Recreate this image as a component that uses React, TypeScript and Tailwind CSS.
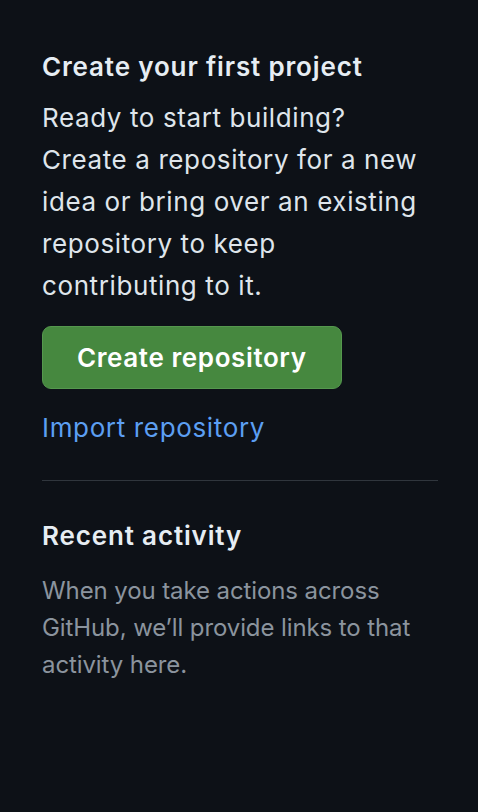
export default function App() {
  return (
    <div
      className="min-h-[812px] w-full bg-[#0d1117] pl-[42px] pr-[40px] pt-[49px] text-[#e6edf3]"
      style={{ fontFamily: 'Inter, "Noto Sans", "Liberation Sans", sans-serif' }}
    >
      <h2 className="text-[26px] font-semibold leading-[36px] tracking-[0.85px]">
        Create your first project
      </h2>
      <p className="mt-[12px] text-[26px] leading-[42px] tracking-[0.6px] text-[#dfe5eb]">
        Ready to start building?
        <br />
        Create a repository for a new idea or bring over an existing repository to keep
        contributing to it.
      </p>

      <button
        type="button"
        className="mt-[19px] h-[63px] rounded-[9px] border border-[#55984e] bg-[#46883f] px-[34px] text-[26px] font-semibold tracking-[0.6px] text-white"
      >
        Create repository
      </button>

      <div className="mt-[21px]">
        <a href="#" className="text-[26px] leading-[36px] tracking-[0.65px] text-[#5c9ff2]">
          Import repository
        </a>
      </div>

      <div className="mt-[34px] h-px w-full bg-[#30363d]" />

      <h2 className="mt-[37px] text-[26px] font-semibold leading-[36px] tracking-[0.85px]">
        Recent activity
      </h2>
      <p className="mt-[18px] pr-[20px] text-[24px] leading-[37px] tracking-[-0.1px] text-[#8b949e]">
        When you take actions across GitHub, we’ll provide links to that activity here.
      </p>
    </div>
  );
}
